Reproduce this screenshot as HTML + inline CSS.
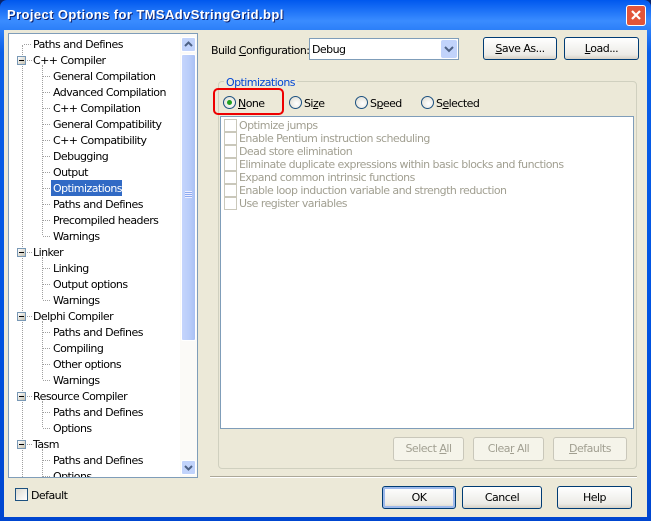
<!DOCTYPE html>
<html><head><style>
*{margin:0;padding:0;box-sizing:border-box}
body{width:651px;height:521px;overflow:hidden;background:#0a246a;font-family:"DejaVu Sans","Liberation Sans",sans-serif;font-size:11px;color:#000;position:relative}
.a{position:absolute}
#win{left:0;top:0;width:651px;height:521px;background:linear-gradient(#0058ee,#3a8cff 4%,#0a5fe8 10%,#0054e3 60%,#0046d0);border-radius:7px 7px 0 0}
#title{left:7px;top:7px;color:#fff;font-weight:bold;font-size:13px;font-family:"Liberation Sans",sans-serif;text-shadow:1px 1px #0a1f6e;letter-spacing:0.4px}
#close{left:626px;top:5px;width:20px;height:21px;background:#e2553a;border:1px solid #fff;border-radius:3px}
#client{left:4px;top:30px;width:643px;height:487px;background:#ece9d8}
.t{position:absolute;white-space:nowrap;font-size:11px;line-height:13px;letter-spacing:-0.55px;margin-top:1px}
.btn{position:absolute;border:1px solid #003c74;border-radius:3px;background:linear-gradient(#fff,#ecebe6 80%,#d6d0c5);text-align:center;font-size:11px;letter-spacing:-0.5px}
.dis{border-color:#c9c7ba;color:#a19f91;background:#f5f4ea}
.cb{position:absolute;width:13px;height:13px;border:1px solid #cac8bb;background:#fff}
.rad{position:absolute;width:13px;height:13px;border:1px solid #1c5180;border-radius:50%;background:radial-gradient(circle at 60% 60%,#fff,#dcd9cd)}
.dv{position:absolute;border-left:1px dotted #a0a0a0;width:0}
.dh{position:absolute;border-top:1px dotted #a0a0a0;height:0}
.pm{position:absolute;width:9px;height:9px;border:1px solid #7898b5;background:linear-gradient(135deg,#fff,#c6c2b2)}
.pm:after{content:"";position:absolute;left:1px;top:3px;width:5px;height:1px;background:#000}
</style></head><body>
<div id="win" class="a"></div>
<div id="title" class="a">Project Options for TMSAdvStringGrid.bpl</div>
<div id="close" class="a"><svg width="18" height="19" style="position:absolute;left:0;top:0"><path d="M5 5 L13 13 M13 5 L5 13" stroke="#fff" stroke-width="2.2"/></svg></div>
<div id="client" class="a"></div>

<!-- tree -->
<div class="a" style="left:8px;top:33px;width:190px;height:445px;border:1px solid #7f9db9;background:#fff;overflow:hidden">
<div class="dv" style="left:13px;top:11px;height:440px"></div>
<div class="dh" style="left:15px;top:10px;width:7px"></div>
<div class="dv" style="left:33px;top:31px;height:170px"></div>
<div class="dv" style="left:33px;top:223px;height:42px"></div>
<div class="dv" style="left:33px;top:287px;height:58px"></div>
<div class="dv" style="left:33px;top:367px;height:26px"></div>
<div class="dv" style="left:33px;top:415px;height:40px"></div>
</div>
<div class="a" style="left:9px;top:34px;width:171px;height:443px;overflow:hidden">
<div class="t" style="left:24px;top:3px">Paths and Defines</div>
<div class="pm" style="left:8px;top:22px"></div><div class="dh" style="left:18px;top:26px;width:5px"></div><div class="t" style="left:24px;top:19px">C++ Compiler</div>
<div class="dh" style="left:34px;top:42px;width:7px"></div><div class="t" style="left:44px;top:35px">General Compilation</div>
<div class="dh" style="left:34px;top:58px;width:7px"></div><div class="t" style="left:44px;top:51px">Advanced Compilation</div>
<div class="dh" style="left:34px;top:74px;width:7px"></div><div class="t" style="left:44px;top:67px">C++ Compilation</div>
<div class="dh" style="left:34px;top:90px;width:7px"></div><div class="t" style="left:44px;top:83px">General Compatibility</div>
<div class="dh" style="left:34px;top:106px;width:7px"></div><div class="t" style="left:44px;top:99px">C++ Compatibility</div>
<div class="dh" style="left:34px;top:122px;width:7px"></div><div class="t" style="left:44px;top:115px">Debugging</div>
<div class="dh" style="left:34px;top:138px;width:7px"></div><div class="t" style="left:44px;top:131px">Output</div>
<div class="dh" style="left:34px;top:154px;width:7px"></div><div class="a" style="left:42px;top:146px;width:71px;height:16px;background:#316ac5"></div><div class="t" style="left:44px;top:147px;color:#fff">Optimizations</div>
<div class="dh" style="left:34px;top:170px;width:7px"></div><div class="t" style="left:44px;top:163px">Paths and Defines</div>
<div class="dh" style="left:34px;top:186px;width:7px"></div><div class="t" style="left:44px;top:179px">Precompiled headers</div>
<div class="dh" style="left:34px;top:202px;width:7px"></div><div class="t" style="left:44px;top:195px">Warnings</div>
<div class="pm" style="left:8px;top:214px"></div><div class="dh" style="left:18px;top:218px;width:5px"></div><div class="t" style="left:24px;top:211px">Linker</div>
<div class="dh" style="left:34px;top:234px;width:7px"></div><div class="t" style="left:44px;top:227px">Linking</div>
<div class="dh" style="left:34px;top:250px;width:7px"></div><div class="t" style="left:44px;top:243px">Output options</div>
<div class="dh" style="left:34px;top:266px;width:7px"></div><div class="t" style="left:44px;top:259px">Warnings</div>
<div class="pm" style="left:8px;top:278px"></div><div class="dh" style="left:18px;top:282px;width:5px"></div><div class="t" style="left:24px;top:275px">Delphi Compiler</div>
<div class="dh" style="left:34px;top:298px;width:7px"></div><div class="t" style="left:44px;top:291px">Paths and Defines</div>
<div class="dh" style="left:34px;top:314px;width:7px"></div><div class="t" style="left:44px;top:307px">Compiling</div>
<div class="dh" style="left:34px;top:330px;width:7px"></div><div class="t" style="left:44px;top:323px">Other options</div>
<div class="dh" style="left:34px;top:346px;width:7px"></div><div class="t" style="left:44px;top:339px">Warnings</div>
<div class="pm" style="left:8px;top:358px"></div><div class="dh" style="left:18px;top:362px;width:5px"></div><div class="t" style="left:24px;top:355px">Resource Compiler</div>
<div class="dh" style="left:34px;top:378px;width:7px"></div><div class="t" style="left:44px;top:371px">Paths and Defines</div>
<div class="dh" style="left:34px;top:394px;width:7px"></div><div class="t" style="left:44px;top:387px">Options</div>
<div class="pm" style="left:8px;top:406px"></div><div class="dh" style="left:18px;top:410px;width:5px"></div><div class="t" style="left:24px;top:403px">Tasm</div>
<div class="dh" style="left:34px;top:426px;width:7px"></div><div class="t" style="left:44px;top:419px">Paths and Defines</div>
<div class="dh" style="left:34px;top:442px;width:7px"></div><div class="t" style="left:44px;top:435px">Options</div>
</div>
<!-- scrollbar -->
<div class="a" style="left:180px;top:34px;width:17px;height:443px;background:#fbfaf7"></div>
<div class="a" style="left:181px;top:37px;width:15px;height:15px;border:1px solid #fff;border-radius:2px;background:#c1d3fb"><svg width="13" height="13"><path d="M3 8 L6.5 4.5 L10 8" stroke="#4d6185" stroke-width="2" fill="none"/></svg></div>
<div class="a" style="left:181px;top:54px;width:15px;height:287px;border:1px solid #fff;border-radius:2px;background:linear-gradient(90deg,#c5d5fc,#b8ccf9 60%,#a9c0f4)"><div class="a" style="left:3px;top:136px;width:7px;height:7px;border-top:1px solid #eef;border-bottom:1px solid #eef;background:linear-gradient(#8caaf0 0 1px,#eef 1px 2px,#8caaf0 2px 3px,#eef 3px 4px,#8caaf0 4px)"></div></div>
<div class="a" style="left:181px;top:460px;width:15px;height:15px;border:1px solid #fff;border-radius:2px;background:#c1d3fb"><svg width="13" height="13"><path d="M3 5 L6.5 8.5 L10 5" stroke="#4d6185" stroke-width="2" fill="none"/></svg></div>

<!-- build config -->
<div class="t" style="left:211px;top:43px">Build <u>C</u>onfiguration:</div>
<div class="a" style="left:309px;top:38px;width:150px;height:22px;border:1px solid #7f9db9;background:#fff"><div class="t" style="left:2px;top:3px">Debug</div>
<div class="a" style="left:131px;top:1px;width:16px;height:18px;background:#c1d3fb;border-radius:2px"><svg width="16" height="18"><path d="M4 7 L8 11 L12 7" stroke="#4d6185" stroke-width="2" fill="none"/></svg></div></div>
<div class="btn" style="left:483px;top:37px;width:74px;height:23px;line-height:21px"><u>S</u>ave As...</div>
<div class="btn" style="left:564px;top:37px;width:75px;height:23px;line-height:21px"><u>L</u>oad...</div>

<!-- group -->
<div class="a" style="left:218px;top:81px;width:419px;height:388px;border:1px solid #d0d0bf;border-radius:4px"></div>
<div class="t" style="left:224px;top:75px;color:#0046d5;background:#ece9d8;padding:0 2px">Optimizations</div>
<div class="a" style="left:213px;top:88px;width:71px;height:27px;border:2px solid #e00;border-radius:5px"></div>
<div class="rad" style="left:223px;top:96px"><div class="a" style="left:3px;top:3px;width:5px;height:5px;border-radius:50%;background:#21a121"></div></div>
<div class="t" style="left:238px;top:96px"><u>N</u>one</div>
<div class="rad" style="left:289px;top:96px"></div><div class="t" style="left:304px;top:96px">Si<u>z</u>e</div>
<div class="rad" style="left:355px;top:96px"></div><div class="t" style="left:370px;top:96px">S<u>p</u>eed</div>
<div class="rad" style="left:421px;top:96px"></div><div class="t" style="left:436px;top:96px">S<u>e</u>lected</div>
<div class="a" style="left:220px;top:116px;width:414px;height:313px;border:1px solid #7f9db9;background:#fff"></div>
<div class="cb" style="left:224px;top:119px"></div><div class="t" style="left:239px;top:118px;color:#a19f91">Optimize jumps</div>
<div class="cb" style="left:224px;top:132px"></div><div class="t" style="left:239px;top:131px;color:#a19f91">Enable Pentium instruction scheduling</div>
<div class="cb" style="left:224px;top:145px"></div><div class="t" style="left:239px;top:144px;color:#a19f91">Dead store elimination</div>
<div class="cb" style="left:224px;top:158px"></div><div class="t" style="left:239px;top:157px;color:#a19f91">Eliminate duplicate expressions within basic blocks and functions</div>
<div class="cb" style="left:224px;top:171px"></div><div class="t" style="left:239px;top:170px;color:#a19f91">Expand common intrinsic functions</div>
<div class="cb" style="left:224px;top:184px"></div><div class="t" style="left:239px;top:183px;color:#a19f91">Enable loop induction variable and strength reduction</div>
<div class="cb" style="left:224px;top:197px"></div><div class="t" style="left:239px;top:196px;color:#a19f91">Use register variables</div>
<div class="btn dis" style="left:393px;top:437px;width:71px;height:24px;line-height:22px">Select <u>A</u>ll</div>
<div class="btn dis" style="left:473px;top:437px;width:71px;height:24px;line-height:22px">Clea<u>r</u> All</div>
<div class="btn dis" style="left:553px;top:437px;width:74px;height:24px;line-height:22px"><u>D</u>efaults</div>

<div class="a" style="left:210px;top:476px;width:427px;height:2px;border-top:1px solid #aca899;border-bottom:1px solid #fff"></div>

<div class="cb" style="left:15px;top:488px;border-color:#1c5180;background:linear-gradient(135deg,#dcdbd2,#fff)"></div>
<div class="t" style="left:31px;top:488px">Default</div>
<div class="btn" style="left:382px;top:486px;width:74px;height:23px;line-height:21px;box-shadow:inset 0 0 0 2px #9db9eb">OK</div>
<div class="btn" style="left:462px;top:486px;width:80px;height:23px;line-height:21px">Cancel</div>
<div class="btn" style="left:557px;top:486px;width:75px;height:23px;line-height:21px">Help</div>
</body></html>
